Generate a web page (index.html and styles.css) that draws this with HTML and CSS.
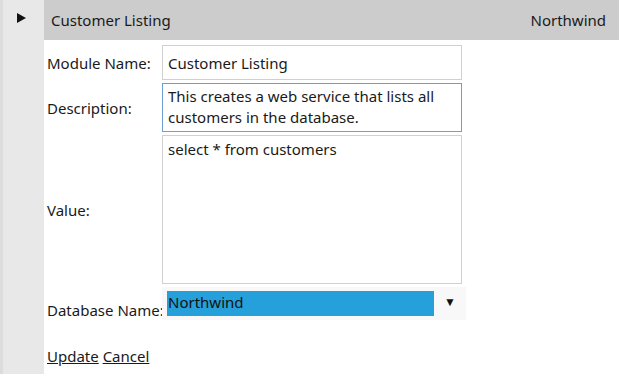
FILE: index.html
```html
<!DOCTYPE html>
<html lang="en">
<head>
    <meta charset="UTF-8">
    <title>Modules</title>
    <link rel="stylesheet" href="styles.css">
</head>
<body>
    <div class="gutter">
        <span class="expander"></span>
    </div>

    <div class="content">
        <div class="header-row">
            <span>Customer Listing</span>
            <span>Northwind</span>
        </div>

        <form class="edit-form">
            <label class="row-label">Module Name:</label>
            <input type="text" class="field name-field" value="Customer Listing">

            <label class="row-label">Description:</label>
            <textarea class="field desc-field">This creates a web service that lists all customers in the database.</textarea>

            <label class="row-label">Value:</label>
            <textarea class="field value-field">select * from customers</textarea>

            <label class="row-label db-label">Database Name:</label>
            <div class="db-select">
                <span class="db-option">Northwind</span>
                <span class="db-arrow">&#9660;</span>
            </div>
        </form>

        <div class="actions">
            <a href="#">Update</a> <a href="#">Cancel</a>
        </div>
    </div>
</body>
</html>
```

FILE: styles.css
```css
body {
    margin: 0;
    padding: 0;
    font-family: "Noto Sans", "Open Sans", sans-serif;
    font-size: 15px;
    color: #1a1a1a;
    display: flex;
    height: 100vh;
    background: white;
}
.gutter {
    width: 41px;
    flex-shrink: 0;
    background: #e8e8e8;
    border-left: 3px solid #dcdcdc;
    position: relative;
}
.expander {
    position: absolute;
    left: 14px;
    top: 13px;
    width: 0;
    height: 0;
    border-top: 5px solid transparent;
    border-bottom: 5px solid transparent;
    border-left: 9px solid #111;
}
.content {
    flex: 1;
}
.header-row {
    height: 40px;
    background: #cccccc;
    display: flex;
    justify-content: space-between;
    align-items: center;
    padding: 0 13px 0 7px;
}
.edit-form {
    display: grid;
    grid-template-columns: 115px 304px;
    row-gap: 3px;
    padding: 5px 0 0 3px;
    align-items: center;
}
.row-label {
    display: block;
    white-space: nowrap;
}
.field {
    font-family: inherit;
    font-size: 15px;
    color: #1a1a1a;
    border: 1px solid #d0d0d0;
    padding: 4px 5px;
    box-sizing: border-box;
    width: 300px;
    margin: 0;
    resize: none;
    outline: none;
    line-height: 21px;
}
.name-field {
    height: 35px;
    padding-top: 5px;
}
.desc-field {
    height: 49px;
    border-color: #6d9fd3;
    padding: 2px 5px;
    overflow: hidden;
}
.value-field {
    height: 149px;
    padding-top: 3px;
}
.db-label {
    align-self: end;
    line-height: 21px;
    margin-bottom: -1px;
}
.db-select {
    width: 304px;
    height: 33px;
    background: #f8f8f8;
    display: flex;
    align-items: flex-start;
    padding: 4px 0 0 5px;
    box-sizing: border-box;
}
.db-option {
    width: 267px;
    height: 25px;
    background: #26a0da;
    color: #111;
    line-height: 22px;
    padding-left: 1px;
    box-sizing: border-box;
}
.db-arrow {
    flex: 1;
    text-align: center;
    font-size: 12px;
    line-height: 22px;
    color: #111;
}
.actions {
    padding: 26px 0 0 3px;
    line-height: 21px;
}
.actions a {
    color: #1a1a1a;
}
```
